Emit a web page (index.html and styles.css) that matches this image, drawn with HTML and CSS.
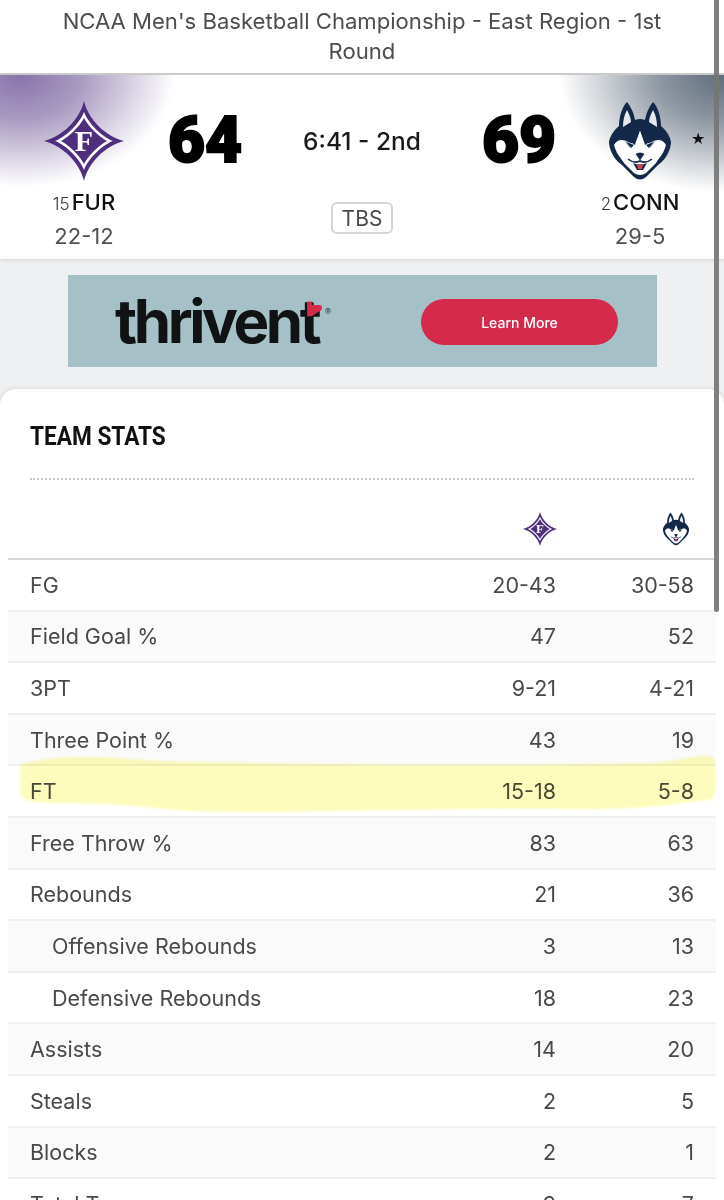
FILE: index.html
```html
<!DOCTYPE html>
<html lang="en">
<head>
<meta charset="utf-8">
<title>Team Stats</title>
<link rel="stylesheet" href="styles.css">
</head>
<body>
<svg class="defs" width="0" height="0" aria-hidden="true">
  <symbol id="furman" viewBox="0 0 80 80">
    <path fill="#4f2d7f" d="M40 0C44 18 62 36 80 40C62 44 44 62 40 80C36 62 18 44 0 40C18 36 36 18 40 0Z"/>
    <path fill="#fff" d="M40 11C44 22 58 36 69 40C58 44 44 58 40 69C36 58 22 44 11 40C22 36 36 22 40 11Z"/>
    <path fill="#4f2d7f" d="M40 17C44 25 55 36 63 40C55 44 44 55 40 63C36 55 25 44 17 40C25 36 36 25 40 17Z"/>
    <text x="40" y="50" text-anchor="middle" class="furman-f">F</text>
  </symbol>
  <symbol id="husky" viewBox="0 0 64 80">
    <path fill="#14294a" d="M19 1C14 6 11 16 11 25C5 30 1 37 1 42C2 52 8 60 14 64L26 76Q32 81 38 76L50 64C56 60 62 52 63 42C63 37 59 30 53 25C53 16 50 6 45 1C41 6 38 12 37 19Q32 17 27 19C26 12 23 6 19 1Z"/>
    <path fill="#e6e9ee" d="M19 9C16 14 15 20 15 26L23 21C23 17 21 13 19 9ZM45 9C48 14 49 20 49 26L41 21C41 17 43 13 45 9Z"/>
    <path fill="#fff" d="M6 44C10 37 16 38 22 43C26 41 29 37 32 29C35 37 38 41 42 43C48 38 54 37 58 44C56 52 52 56 48 62L38 72Q32 76 26 72L16 62C12 56 8 52 6 44Z"/>
    <path fill="#14294a" d="M32 29C30 36 28 40 27 44L15 36L22 30ZM32 29C34 36 36 40 37 44L49 36L42 30Z"/>
    <path fill="#c5ccd6" d="M16 39L25 43L21 47ZM48 39L39 43L43 47Z"/>
    <path fill="#14294a" d="M18 41L26 44L23 47ZM46 41L38 44L41 47Z"/>
    <path fill="#14294a" d="M27.500 53Q32 50 36.500 53L33 58H31Z"/>
    <path fill="none" stroke="#14294a" stroke-width="1.500" d="M32 57V60M20 58Q26 63 32 60Q38 63 44 58"/>
    <path fill="#14294a" d="M25 62Q32 65 39 62L35 69H29Z"/>
    <path fill="#d23a55" d="M29 63.500H35L34 68H30Z"/>
  </symbol>
</svg>

<div class="scrollbar"></div>

<header class="title">NCAA Men's Basketball Championship - East Region - 1st Round</header>

<section class="score">
  <div class="team">
    <svg class="logo-furman"><use href="#furman"/></svg>
    <div class="team-name"><span class="seed">15</span>FUR</div>
    <div class="record">22-12</div>
  </div>
  <div class="points">64</div>
  <div class="status">
    <div class="clock">6:41 - 2nd</div>
    <div class="network">TBS</div>
  </div>
  <div class="points">69</div>
  <div class="team">
    <svg class="logo-husky"><use href="#husky"/></svg>
    <div class="team-name"><span class="seed">2</span>CONN</div>
    <div class="record">29-5</div>
  </div>
  <span class="star">★</span>
</section>

<aside class="ad">
  <div class="wordmark">thrivent<svg class="heart" viewBox="0 0 14 14"><path fill="#d42b4b" d="M1 0H5V3H12Q14 3 14 6Q14 8 11 9L5 13H1Z"/></svg><span class="reg">®</span></div>
  <div class="cta">Learn More</div>
</aside>

<main class="card">
  <h2 class="card-title"><span class="card-title-text">TEAM STATS</span></h2>
  <div class="dots"></div>
  <div class="head-row">
    <span class="head-logo"><svg class="mini-furman"><use href="#furman"/></svg></span>
    <span class="head-logo"><svg class="mini-husky"><use href="#husky"/></svg></span>
  </div>
  <div class="rows">
    <div class="row"><span class="label">FG</span><span class="val">20-43</span><span class="val">30-58</span></div>
    <div class="row"><span class="label">Field Goal %</span><span class="val">47</span><span class="val">52</span></div>
    <div class="row"><span class="label">3PT</span><span class="val">9-21</span><span class="val">4-21</span></div>
    <div class="row"><span class="label">Three Point %</span><span class="val">43</span><span class="val">19</span></div>
    <div class="row"><span class="label">FT</span><span class="val">15-18</span><span class="val">5-8</span></div>
    <div class="row"><span class="label">Free Throw %</span><span class="val">83</span><span class="val">63</span></div>
    <div class="row"><span class="label">Rebounds</span><span class="val">21</span><span class="val">36</span></div>
    <div class="row"><span class="label sub">Offensive Rebounds</span><span class="val">3</span><span class="val">13</span></div>
    <div class="row"><span class="label sub">Defensive Rebounds</span><span class="val">18</span><span class="val">23</span></div>
    <div class="row"><span class="label">Assists</span><span class="val">14</span><span class="val">20</span></div>
    <div class="row"><span class="label">Steals</span><span class="val">2</span><span class="val">5</span></div>
    <div class="row"><span class="label">Blocks</span><span class="val">2</span><span class="val">1</span></div>
    <div class="row"><span class="label">Total Turnovers</span><span class="val">9</span><span class="val">7</span></div>
  </div>
  <svg class="marker" viewBox="0 0 700 60" preserveAspectRatio="none" aria-hidden="true">
    <path fill="#fefcbc" d="M2 10C40 -2 90 2 140 6C260 10 500 12 640 8C665 6 685 -3 698 3C702 20 700 40 696 46C660 50 640 56 560 56C420 54 260 62 170 58C130 54 90 50 50 50C25 50 5 50 2 40Z"/>
  </svg>
</main>
</body>
</html>
```
FILE: styles.css
```css
* { box-sizing: border-box; }
html, body { margin: 0; height: 1200px; overflow: hidden; }
body {
  position: relative;
  background: #eef0f1;
  font-family: Inter, "Liberation Sans", sans-serif;
  color: #48494a;
}
.defs { position: absolute; }
.furman-f { font: 700 30px "Liberation Serif", serif; fill: #fff; }
.scrollbar {
  position: absolute; z-index: 5; left: 714px; top: 0;
  width: 5px; height: 612px; background: #757575; opacity: .92; border-radius: 0 0 3px 3px;
}
.title {
  height: 75px; padding: 6px 56px 0; background: #fff;
  border-bottom: 2px solid #cfcfcf;
  text-align: center; font-size: 22.1px; line-height: 30px; color: #4c4d4e;
}
.score {
  position: relative; height: 184px;
  display: grid; grid-template-columns: 168px 74px 1fr 74px 168px;
  background:
    radial-gradient(ellipse 155px 112px at 20px 0, #8874aa 0%, rgba(136,116,170,.72) 40%, rgba(136,116,170,0) 100%),
    radial-gradient(ellipse 165px 118px at 724px 0, #5f6c7c 0%, rgba(95,108,124,.7) 40%, rgba(95,108,124,0) 100%),
    #fff;
  box-shadow: 0 1px 4px rgba(0,0,0,.14);
}
.team { display: flex; flex-direction: column; align-items: center; padding-top: 26px; }
.logo-furman { width: 80px; height: 80px; display: block; }
.logo-husky { width: 64px; height: 80px; display: block; }
.team-name { margin-top: 6px; font-size: 22px; line-height: 30px; font-weight: 500; color: #111; display: flex; align-items: baseline; }
.seed { font-size: 17px; font-weight: 300; color: #333; margin-right: 2px; }
.record { font-size: 22px; line-height: 30px; margin-top: 2px; color: #505152; }
.points { font-family: Roboto, sans-serif; font-size: 64px; font-weight: 900; line-height: 132px; color: #000; text-align: center; -webkit-text-stroke: 2px #000; }
.status { display: flex; flex-direction: column; align-items: center; padding-top: 50px; }
.clock { font-size: 24.500px; line-height: 32px; font-weight: 500; color: #1a1a1a; }
.network {
  margin-top: 45px; width: 62px; height: 32px;
  border: 2px solid #d5d5d5; border-radius: 6px; background: #fff;
  display: flex; align-items: center; justify-content: center;
  font-size: 21px; color: #48494a;
}
.star { position: absolute; left: 691px; top: 54px; font: 16px "DejaVu Sans", sans-serif; color: #111; }
.ad {
  width: 589px; height: 92px; margin: 16px 0 0 68px; padding: 0 39px 0 47px;
  background: #a6c0c8;
  display: flex; align-items: center; justify-content: space-between;
}
.wordmark { position: relative; font: 700 60px/1 Inter, sans-serif; letter-spacing: -3.400px; color: #101214; }
.heart { position: absolute; left: 191px; top: 10px; width: 16px; height: 17px; }
.reg { position: absolute; left: 210px; top: 16px; font-size: 9px; letter-spacing: 0; font-weight: 400; color: #333; }
.cta {
  width: 197px; height: 46px; margin-top: 2px; border-radius: 23px; background: #d42b4b;
  display: flex; align-items: center; justify-content: center;
  color: #fff; font-size: 14px; font-weight: 500;
}
.card {
  position: relative; margin-top: 22px; height: 812px; padding: 0 8px;
  background: #fff; border-radius: 16px 16px 0 0;
  box-shadow: 0 -1px 4px rgba(0,0,0,.1);
}
.card-title {
  margin: 0; padding: 33px 22px 0; height: 89px;
  font: 700 25px/30px Roboto, sans-serif; color: #111;
}
.card-title-text { display: inline-block; transform: scaleX(.905); transform-origin: left center; white-space: nowrap; }
.dots { margin: 0 22px; height: 0; border-top: 2px dotted #c8c8c8; }
.head-row {
  height: 80px; padding: 32px 22px 0 0; border-bottom: 2px solid #d8d8d8;
  display: grid; grid-template-columns: 1fr 36px 36px; column-gap: 100px;
}
.head-logo { grid-row: 1; display: flex; justify-content: center; }
.head-logo:first-child { grid-column: 2; }
.head-logo:last-child { grid-column: 3; }
.mini-furman { width: 34px; height: 34px; }
.mini-husky { width: 28px; height: 34px; }
.rows { display: flex; flex-direction: column; }
.row {
  height: 51.6px; padding: 0 22px;
  display: grid; grid-template-columns: 1fr 138px 138px; align-items: center;
  border-bottom: 2px solid #f0f0f0;
  font-size: 21.5px; color: #48494a;
}
.row:nth-child(even) { background: #fafafa; }
.val { text-align: right; }
.sub { padding-left: 22px; }
.marker {
  position: absolute; left: 18px; top: 366px; width: 698px; height: 58px;
  mix-blend-mode: multiply; filter: blur(1px);
}
```
